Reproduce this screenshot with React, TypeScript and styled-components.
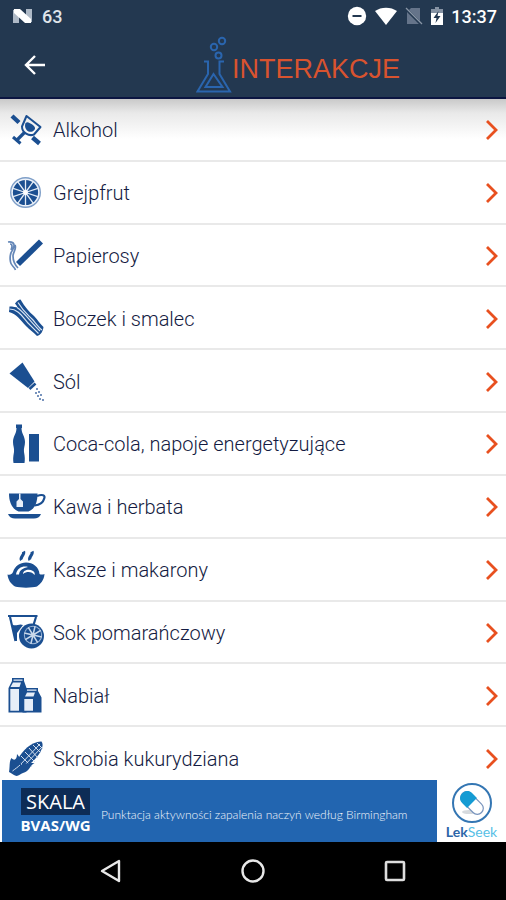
import React from "react";
import styled, { createGlobalStyle } from "styled-components";

const NAVY = "#233850";
const BLUE = "#1b4f91";
const ORANGE = "#e8501f";

const GlobalStyle = createGlobalStyle`
  *, *::before, *::after { box-sizing: border-box; }
  body {
    margin: 0;
    background: #ffffff;
    font-family: Roboto, "Liberation Sans", sans-serif;
  }
`;

const Screen = styled.div`
  display: flex;
  flex-direction: column;
  height: 100vh;
  background: #ffffff;
`;

const Header = styled.header`
  flex: none;
  background: ${NAVY};
  border-bottom: 2px solid #0b1541;
`;

const StatusBar = styled.div`
  display: flex;
  align-items: center;
  justify-content: space-between;
  height: 32px;
  padding: 0 9px 0 12px;
  color: #ffffff;
  font-size: 18px;
  font-weight: 500;
`;

const StatusGroup = styled.div<{ $gap: number }>`
  display: flex;
  align-items: center;
  gap: ${({ $gap }) => $gap}px;
`;

const NotificationCount = styled.span`
  color: #dfe4ea;
`;

const Toolbar = styled.div`
  display: grid;
  grid-template-columns: 1fr auto 1fr;
  align-items: center;
  height: 65px;
  padding: 0 16px;
`;

const BackButton = styled.button`
  display: flex;
  align-items: center;
  justify-content: center;
  width: 38px;
  height: 40px;
  padding: 0;
  border: 0;
  background: none;
  cursor: pointer;
`;

const Brand = styled.div`
  display: flex;
  align-items: center;
  margin-left: 90px;
`;

const Title = styled.h1`
  margin: 8px 0 0;
  color: #d8532f;
  font-family: "Liberation Sans", Arial, sans-serif;
  font-size: 27px;
  font-weight: 400;
  line-height: 32px;
`;

const ListArea = styled.main`
  flex: 1;
  min-height: 0;
  overflow-y: auto;
  scrollbar-width: none;
  background: linear-gradient(#c9c9c9, #e9e9e9 14px, #ffffff 40px) no-repeat;
`;

const List = styled.ul`
  display: grid;
  grid-auto-rows: minmax(62px, 1fr);
  min-height: calc(100% + 10px);
  margin: 0;
  padding: 0;
  list-style: none;
`;

const Item = styled.li`
  display: flex;
  border-bottom: 2px solid #e9e9e9;
`;

const ItemLink = styled.a`
  display: flex;
  flex: 1;
  align-items: center;
  padding: 2px 7px 0 6px;
  color: #141b42;
  font-size: 20px;
  font-weight: 300;
  line-height: 24px;
  text-decoration: none;
`;

const ItemLabel = styled.span`
  flex: 1;
  padding-left: 7px;
`;

const Banner = styled.a`
  display: flex;
  flex: none;
  height: 62px;
  padding-left: 2px;
  background: #ffffff;
  text-decoration: none;
`;

const BannerBody = styled.div`
  display: flex;
  flex: 1;
  align-items: center;
  gap: 10px;
  padding-left: 18px;
  background: #2265b0;
  color: #ffffff;
`;

const Scale = styled.div`
  display: flex;
  flex-direction: column;
  align-items: center;
  width: 71px;
  font-family: "Open Sans", sans-serif;
`;

const ScaleName = styled.span`
  width: 69px;
  background: #0d2c56;
  font-size: 20px;
  line-height: 27px;
  text-align: center;
`;

const ScaleCode = styled.span`
  font-size: 15px;
  font-weight: 700;
  line-height: 20px;
`;

const BannerText = styled.span`
  padding-top: 7px;
  color: #f1f6fc;
  font-family: Lato, sans-serif;
  font-size: 12px;
  font-weight: 300;
  white-space: nowrap;
`;

const Sponsor = styled.div`
  display: flex;
  flex: none;
  flex-direction: column;
  align-items: center;
  width: 69px;
  padding-top: 2px;
  color: #2c66a8;
  font-family: Lato, sans-serif;
  font-size: 14px;
  font-weight: 700;
  line-height: 16px;
`;

const SponsorTail = styled.span`
  color: #57bfe6;
  font-weight: 400;
`;

const NavBar = styled.nav`
  display: grid;
  flex: none;
  grid-template-columns: repeat(3, 1fr);
  height: 58px;
  padding: 0 40px;
  background: #000000;
`;

const NavButton = styled.button`
  display: flex;
  align-items: center;
  justify-content: center;
  padding: 0;
  border: 0;
  background: none;
  cursor: pointer;
`;

const Glyph = ({ children }: { children: React.ReactNode }) => (
  <svg width="40" height="40" viewBox="0 0 40 40" fill={BLUE} aria-hidden="true">
    {children}
  </svg>
);

const spokes = (cx: number, cy: number, r: number, n: number, offset = 0) =>
  Array.from({ length: n }, (_, i) => {
    const a = ((i + offset) * 2 * Math.PI) / n;
    return `M${cx} ${cy}L${(cx + r * Math.cos(a)).toFixed(2)} ${(cy + r * Math.sin(a)).toFixed(2)}`;
  }).join("");

const Alcohol = () => (
  <Glyph>
    <g fill="none" stroke={BLUE}>
      <path d="M6 6L13 12.500M26.500 27.500L33.500 33.500" strokeWidth="4.400" />
      <path d="M20.500 6L34.500 17L28 24.500C23 26.500 16 23 16 16.500Z" strokeWidth="2" strokeLinejoin="round" />
      <path d="M18.500 22.500L10.500 30.500" strokeWidth="3.200" />
      <path d="M7 27L14.500 33.500" strokeWidth="3" />
    </g>
    <path d="M19.500 13C22 11 23.500 13.500 25.500 14C27.500 15 29.500 17 29 19C27 22.500 23 22.500 21 20.500C19 18.500 18.500 15.500 19.500 13Z" />
  </Glyph>
);

const Grapefruit = () => (
  <Glyph>
    <circle cx="19.500" cy="19.500" r="14.800" fill="#eef3fa" stroke="#7f9fc8" strokeWidth="1.400" />
    <circle cx="19.500" cy="19.500" r="12.600" />
    <path d={spokes(19.5, 19.5, 13, 10, 0.5)} stroke="#e4ecf6" strokeWidth="1.300" />
    <circle cx="19.500" cy="19.500" r="2.400" fill="#fff" />
  </Glyph>
);

const Cigarette = () => (
  <Glyph>
    <path d="M12 28L35 5.500" stroke={BLUE} strokeWidth="5.800" />
    <path d="M2 6C9 5 9 10 6.500 14C3 19 4 22 4.500 26C5 30 8 30 9.500 34M4 8C7 8 6 12 5 14M9 9C11 13 7 16 7 20C7 25 8 28 12 32" fill="none" stroke="#6487b8" strokeWidth="1.700" />
  </Glyph>
);

const Bacon = () => (
  <Glyph>
    <path d="M9 4.500C11 2 13 0.500 14.500 0.500C19 8 23 13 28 17C32 21 34 25 37.500 28C37 32 35 36 31 37C27 33 24 31 20 27C14 21 11 15 3 13L3.500 7.500C7 7.500 10 8 12 9C11 7 10 6 9 4.500Z" />
    <path d="M12 3.500C17 12 21 15 26 20C29 23 32 28 36 31M3.500 10C12 10 16 17 22 24C26 28 29 31 32.500 34.500M11 8.500C18 13 24 22 34 32" fill="none" stroke="#d6e2f1" strokeWidth="1.200" />
  </Glyph>
);

const Salt = () => (
  <Glyph>
    <path d="M3.500 11.500L16.500 0.500L28.500 19.500L22 26Z" />
    <path d="M23.500 27L29.500 21.500" stroke={BLUE} strokeWidth="2.600" />
    <path d="M30 27H32M32 30H34M29 31H31M34 33H36M31 34H33M33 37H35M36 38H38" stroke="#7893bd" strokeWidth="1.800" />
  </Glyph>
);

const Cola = () => (
  <Glyph>
    <path d="M10 0.500H16V4H15.500C15.500 10 19 12 19 18C19 22 17.500 24 18 28C19 33 19 36 18.500 39H7.500C7 36 7 33 8 28C8.500 24 7 22 7 18C7 12 10.500 10 10.500 4H10Z" />
    <path d="M23 10H33V37.500H23Z" />
  </Glyph>
);

const Tea = () => (
  <Glyph>
    <path d="M3 6.500H31.500C31.500 15 29 22 22.500 24.500H12.500C6 22 3 15 3 6.500Z" />
    <path d="M31 9C36 7 40 8 38 12C37 16 33 18 28.500 18.500" fill="none" stroke={BLUE} strokeWidth="2.200" />
    <path d="M2 27H35C34 30 31 31.500 28 31.500H9C6 31.500 3 30 2 27Z" />
    <path d="M13 6.500H14.500V12L17 14.500V20H10.500V14.500L13 12Z" fill="#e9eff8" />
  </Glyph>
);

const Pasta = () => (
  <Glyph>
    <path d="M1.500 24.500C4 25 6 24.500 7 22C9 16 14 12.500 20 12.500C27 12.500 33 17 33.500 24C35 25 37 24.500 38.500 24C38 31 34 34 31 36.500C26 38 14 38 9 36.500C5 34 2 30 1.500 24.500Z" />
    <path d="M10 24.500C11 18 17 15.500 22 17C17 18 13.500 20 13 24.500ZM17 24C17 20 23 18.500 27 21C29 22.500 29 24 28.500 25C26 21.500 21 21 17 24Z" fill="#fff" />
    <path d="M15.500 10C13.500 7 19 5 17.500 1.500M24 10C22 7 27.500 5 26 1.500" fill="none" stroke={BLUE} strokeWidth="3.200" />
  </Glyph>
);

const Juice = () => (
  <Glyph>
    <path d="M2 3H31.500M4 4L9.500 28M30 4L27.500 12" fill="none" stroke={BLUE} strokeWidth="2.200" />
    <path d="M6.500 11.500C10 14 13 10 17 12L11 20V28H9Z" />
    <circle cx="25.500" cy="23" r="12.500" />
    <circle cx="27" cy="22" r="9.200" fill="#9db6d6" />
    <circle cx="27" cy="22" r="8.200" />
    <path d={spokes(27, 22, 9, 8, 0.3)} stroke="#c9d8ea" strokeWidth="1.500" />
  </Glyph>
);

const Milk = () => (
  <Glyph>
    <path d="M6 2H18V5L20.500 12V36.500H2.500V12L6 5Z" />
    <path d="M7.500 3.500H16.500V4.800H7.500ZM7 6.500H15L13.500 11H4.500ZM4.300 13H13V34.800H4.300Z" fill="#e7eef8" />
    <path d="M19.500 12H32V15L35.500 21.500V36.500H16.500V22L19.500 15.500Z" />
    <path d="M21 13.500H30.500V14.800H21ZM21 16.500H29L27.500 20.500H19ZM18.300 23H27V34.800H18.300Z" fill="#e7eef8" />
  </Glyph>
);

const Corn = () => (
  <Glyph>
    <path d="M12 20C16 12 26 2 35.500 2.500C40 8 30 22 18 29Z" />
    <path d="M15 17L26 28M19 13L29 23M23 9L32 19M27 6L35 14M31 4L37 10M13 27L34 5M17 28L36 8" stroke="#d3dfef" strokeWidth="1" />
    <path d="M3 33C4 28 3 22 5.500 19C8 22 11 21 11 15C14 18 15 22 15 26C20 24 24 24 28.500 24C24 26 23 33 17 34C14 35 12 38 9 36.500C6 35 5 34 3 33Z" />
    <path d="M6.500 32C9 30 12 28 14 26" stroke="#d3dfef" strokeWidth="1" />
  </Glyph>
);

const Chevron = () => (
  <svg width="14" height="22" viewBox="0 0 14 22" fill="none" aria-hidden="true">
    <path d="M2 2L11 11L2 20" stroke={ORANGE} strokeWidth="2.800" />
  </svg>
);

const items = [
  { label: "Alkohol", Icon: Alcohol },
  { label: "Grejpfrut", Icon: Grapefruit },
  { label: "Papierosy", Icon: Cigarette },
  { label: "Boczek i smalec", Icon: Bacon },
  { label: "Sól", Icon: Salt },
  { label: "Coca-cola, napoje energetyzujące", Icon: Cola },
  { label: "Kawa i herbata", Icon: Tea },
  { label: "Kasze i makarony", Icon: Pasta },
  { label: "Sok pomarańczowy", Icon: Juice },
  { label: "Nabiał", Icon: Milk },
  { label: "Skrobia kukurydziana", Icon: Corn },
];

const Notification = () => (
  <svg width="21" height="16" viewBox="0 0 21 16" aria-hidden="true">
    <path d="M1 2L7 1V15H1ZM14 1H20V14L14 15Z" fill="#aeb9c6" />
    <path d="M2 1H8L19 11V15H13L2 5Z" fill="#fff" />
  </svg>
);

const DoNotDisturb = () => (
  <svg width="20" height="20" viewBox="0 0 20 20" aria-hidden="true">
    <circle cx="10" cy="10" r="9.200" fill="#fff" />
    <path d="M5.500 10H14.500" stroke={NAVY} strokeWidth="2" />
  </svg>
);

const Wifi = () => (
  <svg width="22" height="18" viewBox="0 0 22 18" aria-hidden="true">
    <path d="M0 4C6-0.500 16-0.500 22 4L11 18Z" fill="#fff" />
  </svg>
);

const NoSim = () => (
  <svg width="18" height="18" viewBox="0 0 18 18" aria-hidden="true">
    <path d="M6 1H15V17H2V5Z" fill="#65748a" />
    <path d="M0 1L17 18" stroke={NAVY} strokeWidth="3" />
    <path d="M1 1L17 17" stroke="#8a96a6" strokeWidth="1.200" />
  </svg>
);

const Battery = () => (
  <svg width="12" height="18" viewBox="0 0 12 18" aria-hidden="true">
    <path d="M4 0H8V2H12V6H0V2H4Z" fill="#8693a4" />
    <path d="M0 6H12V18H0Z" fill="#fff" />
    <path d="M7.500 4L2.500 11H5.500L4.500 16L9.500 9H6.500Z" fill={NAVY} />
  </svg>
);

const Flask = () => (
  <svg width="36" height="58" viewBox="0 0 36 58" fill="none" stroke="#2a65ae" strokeWidth="2" aria-hidden="true">
    <circle cx="26" cy="5" r="3.200" />
    <circle cx="18" cy="11" r="3.200" />
    <circle cx="22.500" cy="19.500" r="3" />
    <path d="M8 25.500H12V38L1.500 55.500H34L23.500 38V25.500H28" />
    <path d="M17.500 38L9.500 51H26.500Z" />
  </svg>
);

const Pill = () => (
  <svg width="42" height="42" viewBox="0 0 42 42" fill="none" aria-hidden="true">
    <circle cx="21" cy="21" r="19" stroke="#3476b3" strokeWidth="2" />
    <ellipse cx="18" cy="30" rx="7" ry="2" fill="#d6dade" />
    <g transform="rotate(45 21 21)">
      <rect x="7.500" y="15" width="27" height="12" rx="6" fill="#fff" stroke="#7894bd" strokeWidth="1.200" />
      <path d="M21 14V28H14C5 28 5 14 14 14Z" fill="#159bd3" />
    </g>
  </svg>
);

export default function App() {
  return (
    <Screen>
      <GlobalStyle />
      <Header>
        <StatusBar>
          <StatusGroup $gap={9}>
            <Notification />
            <NotificationCount>63</NotificationCount>
          </StatusGroup>
          <StatusGroup $gap={8}>
            <DoNotDisturb />
            <Wifi />
            <NoSim />
            <Battery />
            <span>13:37</span>
          </StatusGroup>
        </StatusBar>
        <Toolbar>
          <BackButton type="button" aria-label="Wstecz">
            <svg width="22" height="22" viewBox="0 0 22 22" fill="none" stroke="#fff" strokeWidth="2.400" aria-hidden="true">
              <path d="M11 2L2 11L11 20M2 11H21" />
            </svg>
          </BackButton>
          <Brand>
            <Flask />
            <Title>INTERAKCJE</Title>
          </Brand>
        </Toolbar>
      </Header>
      <ListArea>
        <List>
          {items.map(({ label, Icon }) => (
            <Item key={label}>
              <ItemLink href="#">
                <Icon />
                <ItemLabel>{label}</ItemLabel>
                <Chevron />
              </ItemLink>
            </Item>
          ))}
        </List>
      </ListArea>
      <Banner href="#">
        <BannerBody>
          <Scale>
            <ScaleName>SKALA</ScaleName>
            <ScaleCode>BVAS/WG</ScaleCode>
          </Scale>
          <BannerText>Punktacja aktywności zapalenia naczyń według Birmingham</BannerText>
        </BannerBody>
        <Sponsor>
          <Pill />
          <span>
            Lek<SponsorTail>Seek</SponsorTail>
          </span>
        </Sponsor>
      </Banner>
      <NavBar>
        <NavButton type="button" aria-label="Wstecz">
          <svg width="24" height="26" viewBox="0 0 24 26" fill="none" aria-hidden="true">
            <path d="M3 13L20 3V23Z" stroke="#e8e8e8" strokeWidth="2.400" strokeLinejoin="round" />
          </svg>
        </NavButton>
        <NavButton type="button" aria-label="Ekran główny">
          <svg width="24" height="24" viewBox="0 0 24 24" fill="none" aria-hidden="true">
            <circle cx="12" cy="12" r="10.500" stroke="#e8e8e8" strokeWidth="2.400" />
          </svg>
        </NavButton>
        <NavButton type="button" aria-label="Ostatnie aplikacje">
          <svg width="22" height="22" viewBox="0 0 22 22" fill="none" aria-hidden="true">
            <rect x="2" y="2" width="18" height="18" rx="1" stroke="#dedede" strokeWidth="2.600" />
          </svg>
        </NavButton>
      </NavBar>
    </Screen>
  );
}
